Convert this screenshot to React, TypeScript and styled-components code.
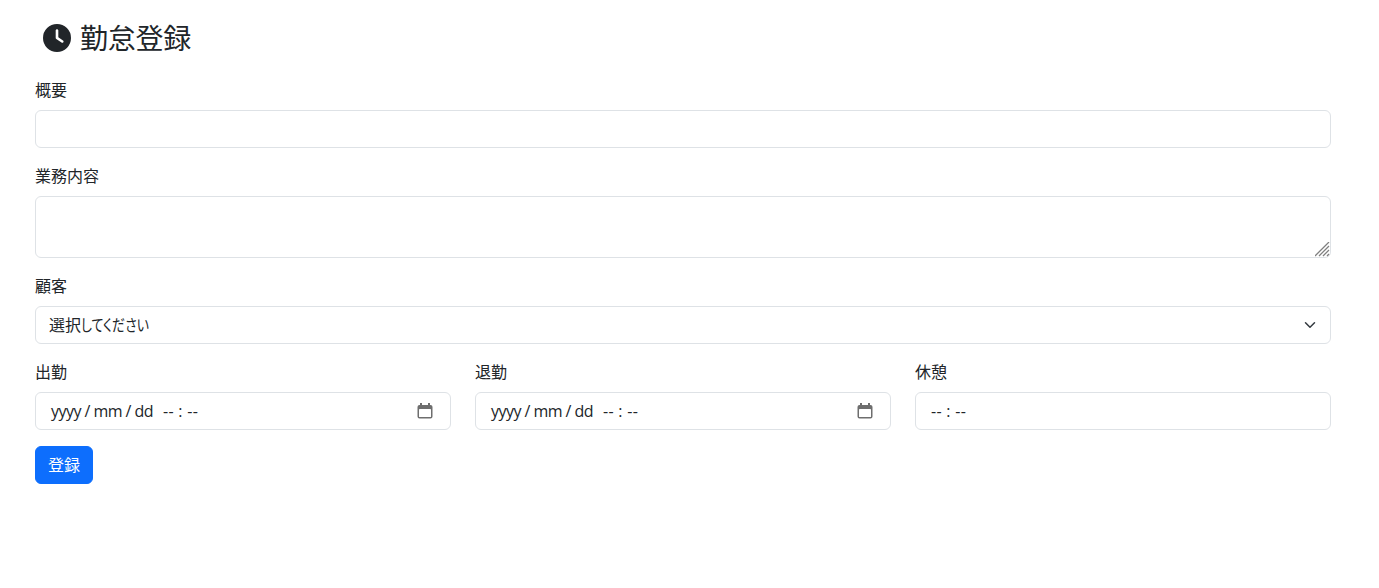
import React from "react";
import styled, { createGlobalStyle } from "styled-components";
import { FaClock } from "react-icons/fa6";

const Global = createGlobalStyle`
  html, body { margin: 0; padding: 0; background: #fff; }
  body {
    font-family: "Open Sans", "Noto Sans CJK JP", sans-serif;
    font-size: 16px;
    line-height: 24px;
    color: #212529;
  }
`;

const Page = styled.main`
  width: 1296px;
  margin-left: 35px;
  box-sizing: border-box;
`;

const Heading = styled.h3`
  display: flex;
  align-items: center;
  gap: 9px;
  margin: 0;
  height: 78px;
  padding: 0 0 3px 8px;
  box-sizing: border-box;
  font-size: 28px;
  font-weight: 400;
  line-height: 34px;
  letter-spacing: -0.25px;
`;

const Field = styled.div`
  margin-bottom: 16px;
`;

const Label = styled.label`
  display: block;
  margin-bottom: 8px;
  font-size: 16px;
  line-height: 24px;
`;

const controlBase = `
  display: block;
  width: 100%;
  box-sizing: border-box;
  border: 1px solid #dee2e6;
  border-radius: 6px;
  background-color: #fff;
  color: #212529;
  font-family: "Open Sans", "Noto Sans CJK JP", sans-serif;
  font-size: 16px;
  line-height: 24px;
  padding: 6px 12px;
  outline: none;
`;

const TextInput = styled.input`
  ${controlBase}
  height: 38px;
`;

const TextArea = styled.textarea`
  ${controlBase}
  height: 62px;
  resize: vertical;

  &::-webkit-resizer {
    background-color: transparent;
    background-image: url("data:image/svg+xml,%3csvg xmlns='http://www.w3.org/2000/svg' width='15' height='15'%3e%3cg stroke='%23808080' stroke-width='1.3'%3e%3cpath d='M0 14 14 0M4 14 14 4M8 14 14 8M12 14 14 12'/%3e%3c/g%3e%3c/svg%3e");
    background-repeat: no-repeat;
  }
`;

const SelectBox = styled.div`
  ${controlBase}
  display: flex;
  align-items: center;
  justify-content: space-between;
  height: 38px;
  padding: 0 12px 0 13px;
`;

const SelectValue = styled.span`
  display: flex;
  white-space: pre;
`;

const Kana = styled.span`
  display: block;
  width: 68px;
  font-feature-settings: "palt";
  transform: scaleX(0.81);
  transform-origin: left center;
`;

const Chevron = styled.svg`
  width: 16px;
  height: 12px;
  flex: none;
`;

const Columns = styled.div`
  display: grid;
  grid-template-columns: repeat(3, 416px);
  gap: 24px;
`;

const FakeDate = styled.div`
  ${controlBase}
  display: flex;
  align-items: center;
  height: 38px;
  padding: 0 16px 0 15px;
  white-space: pre;
`;

const DatePart = styled.span`
  letter-spacing: -0.55px;
  margin-right: 10px;
`;

const TimePart = styled.span`
  letter-spacing: 0.3px;
`;

const CalendarIcon = styled.svg`
  width: 18px;
  height: 18px;
  flex: none;
  margin-left: auto;
  color: #6e6e6e;
`;

const Submit = styled.button`
  display: block;
  width: 58px;
  height: 38px;
  padding: 0;
  box-sizing: border-box;
  border: 1px solid #0d6efd;
  border-radius: 6px;
  background: #0d6efd;
  color: #fff;
  font-family: "Open Sans", "Noto Sans CJK JP", sans-serif;
  font-size: 16px;
  line-height: 24px;
`;

const Calendar = () => (
  <CalendarIcon viewBox="0 0 18 18" aria-hidden="true">
    <path fill="currentColor" d="M4 1h2v2h6V1h2v2h.5A2 2 0 0 1 16.500 5v9.500a2 2 0 0 1-2 2h-11a2 2 0 0 1-2-2V5a2 2 0 0 1 2-2H4z" />
    <rect x="3" y="7" width="12" height="8" rx="0.6" fill="#fff" />
  </CalendarIcon>
);

export default function App() {
  return (
    <Page>
      <Global />
      <Heading>
        <FaClock size={28} color="#212529" />
        勤怠登録
      </Heading>
      <Field>
        <Label>概要</Label>
        <TextInput type="text" />
      </Field>
      <Field>
        <Label>業務内容</Label>
        <TextArea />
      </Field>
      <Field>
        <Label>顧客</Label>
        <SelectBox>
          <SelectValue>
            選択
            <Kana>してください</Kana>
          </SelectValue>
          <Chevron viewBox="0 0 16 16" aria-hidden="true">
            <path fill="none" stroke="#343a40" strokeLinecap="round" strokeLinejoin="round" strokeWidth="2" d="m2 5 6 6 6-6" />
          </Chevron>
        </SelectBox>
      </Field>
      <Columns>
        <Field>
          <Label>出勤</Label>
          <FakeDate>
            <DatePart>yyyy / mm / dd</DatePart>
            <TimePart>-- : --</TimePart>
            <Calendar />
          </FakeDate>
        </Field>
        <Field>
          <Label>退勤</Label>
          <FakeDate>
            <DatePart>yyyy / mm / dd</DatePart>
            <TimePart>-- : --</TimePart>
            <Calendar />
          </FakeDate>
        </Field>
        <Field>
          <Label>休憩</Label>
          <FakeDate>
            <TimePart>-- : --</TimePart>
          </FakeDate>
        </Field>
      </Columns>
      <Submit type="button">登録</Submit>
    </Page>
  );
}
